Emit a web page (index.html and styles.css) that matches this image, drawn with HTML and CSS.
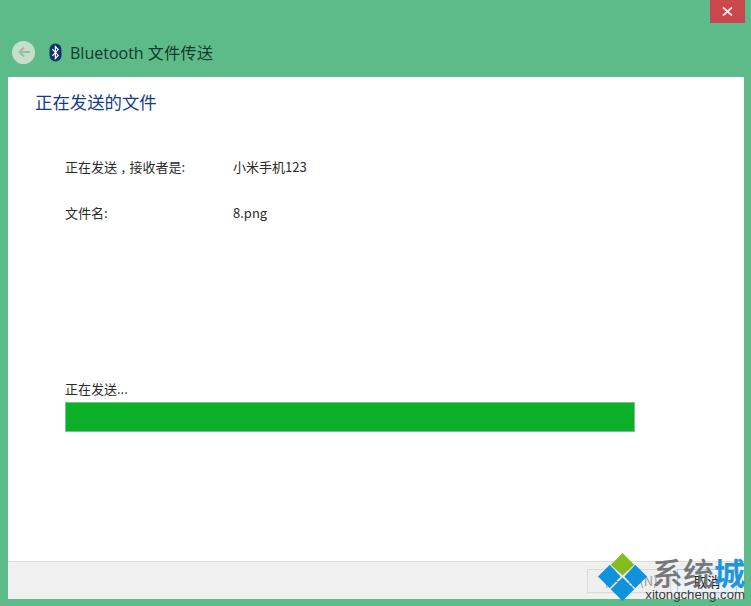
FILE: index.html
```html
<!DOCTYPE html>
<html lang="zh">
<head>
<meta charset="utf-8">
<title>Bluetooth 文件传送</title>
<link rel="stylesheet" href="styles.css">
</head>
<body>
<div class="window">
  <div class="titlebar">
    <div class="close-row">
      <div class="close"><svg width="11" height="11" viewBox="0 0 11 11"><path d="M1 1.5L10 9.5M10 1.5L1 9.5" stroke="#f6e6e4" stroke-width="1.7" fill="none"/></svg></div>
    </div>
    <div class="nav-row">
      <div class="back"><svg width="14" height="12" viewBox="0 0 14 12"><path d="M13 6H3M7 1.5L2.5 6L7 10.5" stroke="#a0b9a6" stroke-width="2" fill="none"/></svg></div>
      <svg class="bt" width="13" height="19" viewBox="0 0 13 19"><rect x="0.5" y="0.5" width="12" height="18" rx="6" fill="#0f3468"/><path d="M3.4 6.2L9.2 12.4L6.4 15.4V3.6L9.2 6.6L3.4 12.8" stroke="#fff" stroke-width="1.2" fill="none"/></svg>
      <span class="wintitle">Bluetooth <span class="wintitle-cn">文件传送</span></span>
    </div>
  </div>
  <div class="client">
    <main class="content">
      <h1 class="heading">正在发送的文件</h1>
      <div class="info">
        <div class="info-row"><span class="label">正在发送 , 接收者是:</span><span>小米手机123</span></div>
        <div class="info-row"><span class="label">文件名:</span><span>8.png</span></div>
      </div>
      <div class="status">正在发送...</div>
      <div class="progress"></div>
    </main>
    <footer class="footer">
      <div class="btn btn-next">下一步(N)</div>
      <div class="btn btn-cancel">取消</div>
    </footer>
  </div>
  <div class="watermark">
    <svg class="wm-logo" width="49" height="49" viewBox="0 0 54 54">
      <path d="M27 1L40 14L27 26L14 14Z" fill="#86bd1c"/>
      <path d="M13 14L25 27L13 40L0 27Z" fill="#0f93dc"/>
      <path d="M41 14L54 27L41 40L29 27Z" fill="#0f93dc"/>
      <path d="M27 28L40 41L27 54L14 41Z" fill="#0f93dc"/>
    </svg>
    <div class="wm-text">
      <div class="wm-cn"><span class="wm-gray">系统</span><span class="wm-blue">城</span></div>
      <div class="wm-en">xitongcheng.com</div>
    </div>
  </div>
</div>
</body>
</html>
```
FILE: styles.css
```css
* { box-sizing: border-box; }
html, body { margin: 0; padding: 0; }
body { font-family: "Noto Sans CJK SC", "Open Sans", sans-serif; }
.window {
  position: relative;
  width: 751px;
  height: 606px;
  background: #5dbb8a;
  padding: 0 7px 7px 8px;
  display: flex;
  flex-direction: column;
  overflow: hidden;
}
.titlebar { height: 77px; flex: none; display: flex; flex-direction: column; }
.close-row { display: flex; justify-content: flex-end; margin-right: -1px; }
.close {
  width: 35px;
  height: 23px;
  background: #c9474d;
  display: flex;
  align-items: center;
  justify-content: center;
}
.nav-row { display: flex; align-items: center; margin-top: 16px; padding-left: 4px; height: 26px; }
.back {
  width: 23px;
  height: 23px;
  border-radius: 50%;
  background: #c5dfcb;
  display: flex;
  align-items: center;
  justify-content: center;
}
.bt { margin-left: 14px; }
.wintitle { margin-left: 8px; font-size: 16px; color: #12392b; font-family: "Open Sans", "Noto Sans CJK SC", sans-serif; white-space: nowrap; }
.wintitle-cn { letter-spacing: 0.4px; }
.client { flex: 1; background: #fff; display: flex; flex-direction: column; min-height: 0; }
.content { flex: 1; padding: 13px 0 0 28px; }
.heading { margin: 0 0 0 -1px; font-size: 17.4px; line-height: 24px; font-weight: 400; color: #143c8c; }
.info { margin: 43px 0 0 29px; font-size: 13px; color: #2a2a2a; }
.info-row { display: flex; height: 46px; line-height: 20px; }
.label { width: 168px; word-spacing: 1.5px; }
.status { margin: 131px 0 0 29px; font-size: 13px; line-height: 18px; color: #2a2a2a; }
.progress { margin: 4px 0 0 29px; width: 570px; height: 30px; background: #0bb028; border: 1px solid #7fbf8a; }
.footer {
  height: 38px;
  flex: none;
  background: #f0f0f0;
  border-top: 1px solid #dcdcdc;
  display: flex;
  justify-content: flex-end;
  align-items: center;
  padding: 0 7px 0 0;
  gap: 6px;
  font-size: 13px;
  color: #9a9a9a;
}
.btn { height: 24px; line-height: 22px; text-align: center; border: 1px solid #d9d9d9; background: #efefef; }
.btn-next { width: 84px; }
.btn-cancel { width: 60px; border-color: #a9cdf0; color: #222; background: #ecf2f8; font-size: 13.5px; }
.watermark {
  position: absolute;
  left: 598px;
  top: 552px;
  display: flex;
  align-items: flex-start;
}
.wm-text { margin-left: -2px; margin-top: 5px; width: 100px; display: flex; flex-direction: column; align-items: flex-end; }
.wm-cn { font-size: 31px; line-height: 30px; font-weight: 500; white-space: nowrap; }
.wm-gray { color: #6e6e6e; opacity: .92; }
.wm-blue { color: #1f96dc; font-weight: 700; }
.wm-en { font-family: "Liberation Sans", Arial, sans-serif; font-size: 13.2px; line-height: 16px; color: #3a3a3a; white-space: nowrap; }
```
